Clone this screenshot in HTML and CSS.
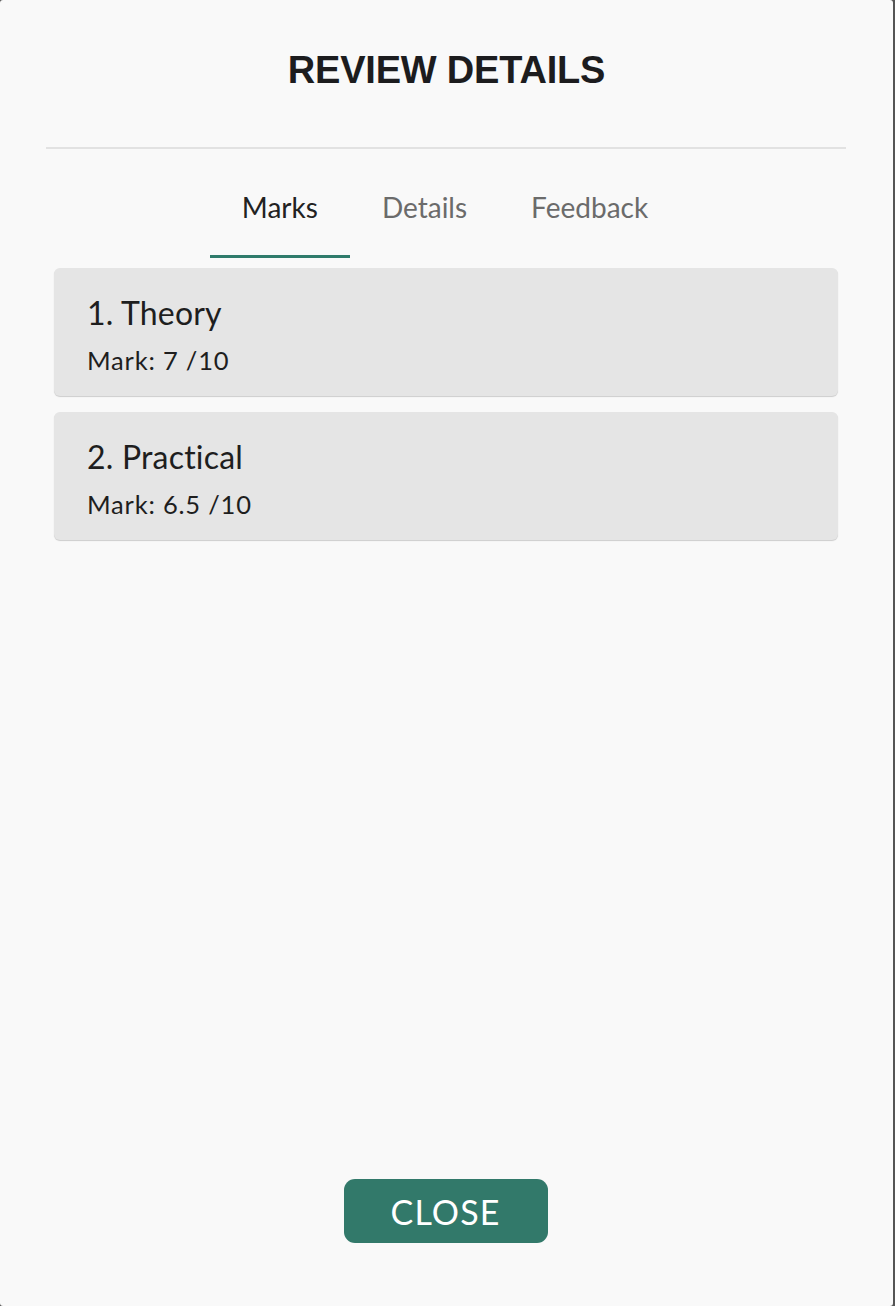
FILE: index.html
```html
<!DOCTYPE html>
<html>
<head>
<meta charset="utf-8">
<link rel="stylesheet" href="styles.css">
</head>
<body>
<div class="modal">
  <h1 class="title">REVIEW DETAILS</h1>
  <div class="divider"></div>
  <nav class="tabs">
    <div class="tab active">Marks</div>
    <div class="tab">Details</div>
    <div class="tab">Feedback</div>
  </nav>
  <div class="cards">
    <div class="card">
      <div class="card-title">1. Theory</div>
      <div class="card-mark">Mark: 7 /10</div>
    </div>
    <div class="card">
      <div class="card-title">2. Practical</div>
      <div class="card-mark">Mark: 6.5 /10</div>
    </div>
  </div>
  <div class="spacer"></div>
  <div class="footer">
    <button class="close-btn">CLOSE</button>
  </div>
</div>
</body>
</html>
```
FILE: styles.css
```css
html, body {
  margin: 0;
  padding: 0;
  background: #555555;
  height: 100%;
}
.modal {
  width: 893px;
  height: 1306px;
  background: #f9f9f9;
  border-radius: 3px;
  display: flex;
  flex-direction: column;
  box-sizing: border-box;
  font-family: Lato, "Noto Sans", sans-serif;
}
.title {
  margin: 0;
  padding-top: 49px;
  height: 42px;
  line-height: 42px;
  text-align: center;
  font-family: "Liberation Sans", Arial, sans-serif;
  font-weight: 700;
  font-size: 38px;
  color: #1c1c1e;
  letter-spacing: -0.2px;
}
.divider {
  margin: 56px 47px 0 46px;
  height: 2px;
  background: #e2e2e2;
}
.tabs {
  display: flex;
  justify-content: center;
  padding-right: 3px;
}
.tab {
  padding: 43px 32px 33px;
  font-size: 28px;
  line-height: 30px;
  color: #6b6b6b;
  border-bottom: 3px solid transparent;
}
.tab.active {
  color: #222222;
  border-bottom-color: #2f7b6b;
}
.cards {
  display: flex;
  flex-direction: column;
  gap: 16px;
  margin: 10px 55px 0 54px;
}
.card {
  background: #e5e5e5;
  border-radius: 6px;
  box-shadow: 0 1px 1px rgba(0,0,0,0.18);
  height: 128px;
  box-sizing: border-box;
  padding: 27px 33px 0;
  color: #1e1e1e;
}
.card-title {
  font-size: 32px;
  line-height: 36px;
  letter-spacing: 0.2px;
}
.card-mark {
  font-size: 25.5px;
  line-height: 30px;
  letter-spacing: 0.8px;
  margin-top: 14px;
}
.spacer {
  flex: 1;
}
.footer {
  display: flex;
  justify-content: center;
  padding-bottom: 63px;
  padding-right: 2px;
}
.close-btn {
  width: 204px;
  height: 64px;
  border: none;
  border-radius: 11px;
  background: #32796a;
  color: #ffffff;
  font-family: Lato, "Noto Sans", sans-serif;
  font-size: 34px;
  letter-spacing: 1.1px;
  padding: 0;
}
```
